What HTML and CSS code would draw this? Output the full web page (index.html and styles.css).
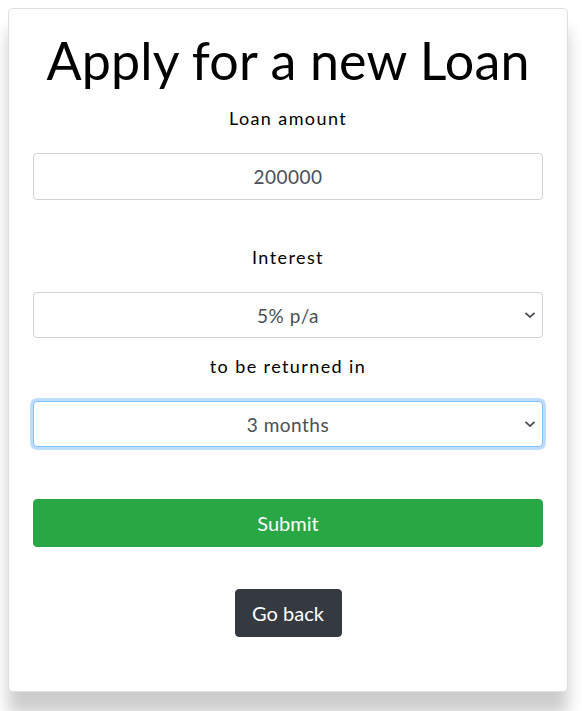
FILE: index.html
```html
<!DOCTYPE html>
<html lang="en">
<head>
<meta charset="utf-8">
<title>Apply for a new Loan</title>
<link rel="stylesheet" href="styles.css">
</head>
<body>
<div class="card">
  <h1 class="title">Apply for a new Loan</h1>
  <form class="form">
    <div class="field">
      <label class="label" for="amount">Loan amount</label>
      <input class="control" id="amount" type="text" value="200000">
    </div>
    <div class="field field-spaced">
      <label class="label" for="interest">Interest</label>
      <select class="control select" id="interest">
        <option>5% p/a</option>
      </select>
    </div>
    <div class="field field-tight">
      <label class="label" for="term">to be returned in</label>
      <select class="control select focused" id="term">
        <option>3 months</option>
      </select>
    </div>
    <button class="btn btn-submit" type="button">Submit</button>
  </form>
  <div class="back-row">
    <button class="btn btn-back" type="button">Go back</button>
  </div>
</div>
</body>
</html>
```
FILE: styles.css
```css
html, body {
  margin: 0;
  padding: 0;
  background: #fff;
}
body {
  padding: 8px 8px 40px;
  font-family: "Lato", "DejaVu Sans", sans-serif;
  color: #000;
}
.card {
  width: 560px;
  box-sizing: border-box;
  height: 684px;
  background: #fff;
  border: 1px solid rgba(0,0,0,.125);
  border-radius: 5px;
  box-shadow: 0 22px 16px rgba(0,0,0,.2);
  padding: 20px 24px 40px;
}
.title {
  margin: 0;
  font-weight: 400;
  font-size: 52px;
  line-height: 62px;
  letter-spacing: 0.15px;
  text-align: center;
}
.form {
  display: flex;
  flex-direction: column;
}
.field {
  display: flex;
  flex-direction: column;
  align-items: stretch;
}
.field-spaced { margin-top: 45px; }
.field-tight { margin-top: 16px; }
.label {
  display: block;
  text-align: center;
  font-size: 18px;
  line-height: 24px;
  letter-spacing: 1.4px;
  margin: 15px 0 23px;
}
.field-spaced .label,
.field-tight .label { margin-top: 0; }
.control {
  box-sizing: border-box;
  width: 100%;
  height: 47px;
  margin: 0;
  border: 1px solid #ced4da;
  border-radius: 4px;
  background: #fff;
  color: #495057;
  font-family: inherit;
  font-size: 19px;
  letter-spacing: 0.5px;
  text-align: center;
  text-align-last: center;
  padding: 0 12px;
  outline: none;
}
.select {
  height: 46px;
  -webkit-appearance: none;
  appearance: none;
  background-image: url("data:image/svg+xml,%3Csvg xmlns='http://www.w3.org/2000/svg' width='12' height='8' viewBox='0 0 12 8'%3E%3Cpath d='M1.5 1.8l4.5 4.3 4.5-4.3' fill='none' stroke='%23494d52' stroke-width='1.8'/%3E%3C/svg%3E");
  background-repeat: no-repeat;
  background-position: right 6px center;
  background-size: 12px 8px;
}
.focused {
  border-color: #80bdff;
  box-shadow: 0 0 0 3px rgba(0,123,255,.25);
}
.btn {
  box-sizing: border-box;
  height: 48px;
  border: 1px solid transparent;
  border-radius: 4px;
  color: #fff;
  font-family: inherit;
  font-size: 20px;
  padding: 0 16px;
  cursor: pointer;
}
.btn-submit {
  margin-top: 52px;
  width: 100%;
  background: #28a745;
  border-color: #28a745;
}
.back-row {
  display: flex;
  justify-content: center;
  margin-top: 42px;
}
.btn-back {
  background: #343a40;
  border-color: #343a40;
  width: 107px;
}
```
